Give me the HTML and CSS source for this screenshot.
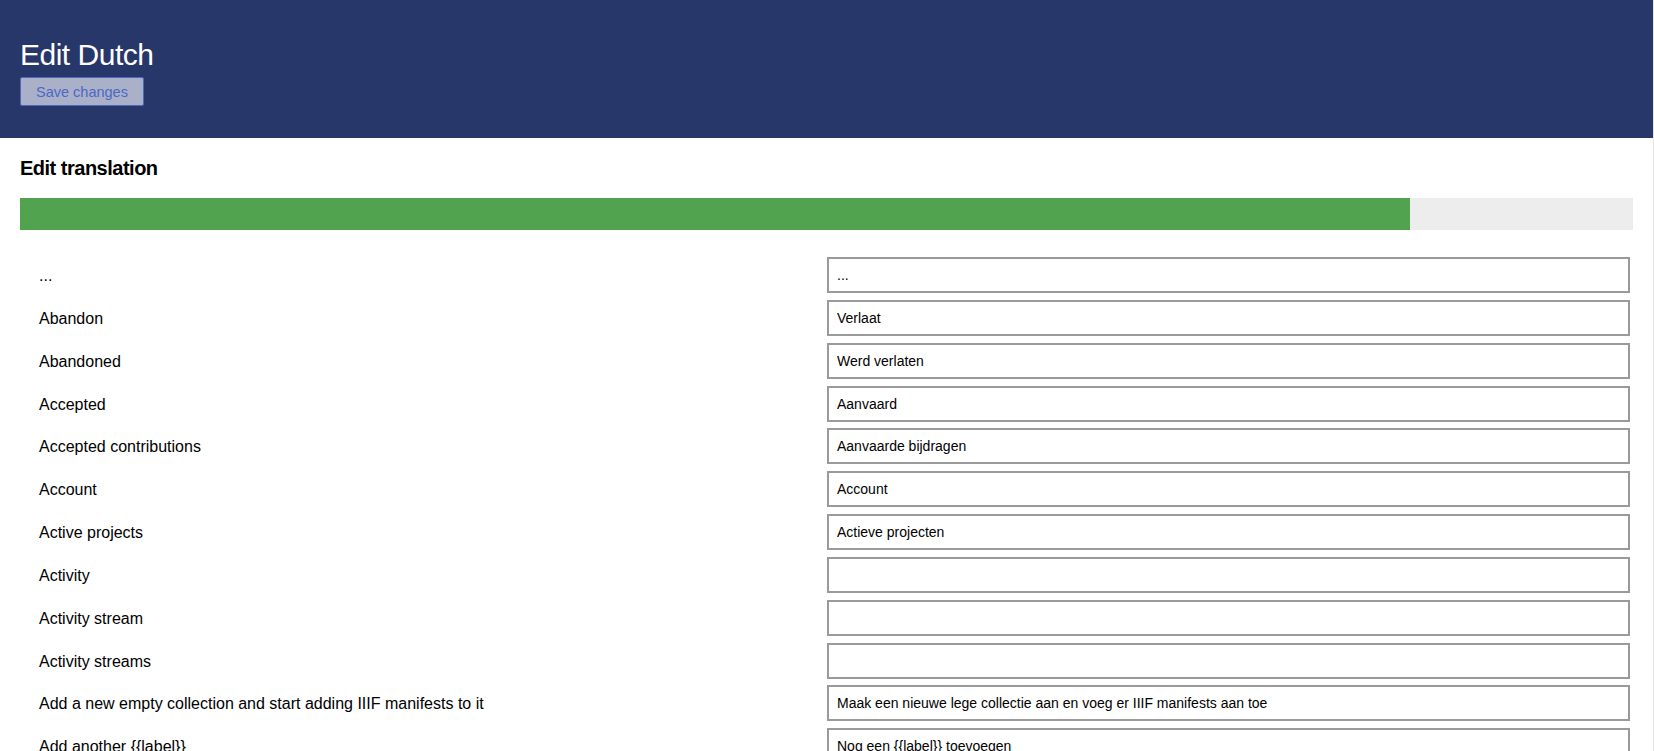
FILE: index.html
```html
<!DOCTYPE html>
<html lang="en">
<head>
<meta charset="utf-8">
<title>Edit Dutch</title>
<link rel="stylesheet" href="styles.css">
</head>
<body>
<div class="page">
  <header class="header">
    <h1 class="header-title">Edit Dutch</h1>
    <button class="save-btn" type="button" disabled>Save changes</button>
  </header>
  <main class="content">
    <h2 class="section-title">Edit translation</h2>
    <div class="progress"><div class="progress-fill" style="width: 86.2%"></div></div>
    <div class="rows">
      <div class="label">...</div>
      <div class="field"><input class="input" type="text" value="..."></div>
      <div class="label">Abandon</div>
      <div class="field"><input class="input" type="text" value="Verlaat"></div>
      <div class="label">Abandoned</div>
      <div class="field"><input class="input" type="text" value="Werd verlaten"></div>
      <div class="label">Accepted</div>
      <div class="field"><input class="input" type="text" value="Aanvaard"></div>
      <div class="label">Accepted contributions</div>
      <div class="field"><input class="input" type="text" value="Aanvaarde bijdragen"></div>
      <div class="label">Account</div>
      <div class="field"><input class="input" type="text" value="Account"></div>
      <div class="label">Active projects</div>
      <div class="field"><input class="input" type="text" value="Actieve projecten"></div>
      <div class="label">Activity</div>
      <div class="field"><input class="input" type="text" value=""></div>
      <div class="label">Activity stream</div>
      <div class="field"><input class="input" type="text" value=""></div>
      <div class="label">Activity streams</div>
      <div class="field"><input class="input" type="text" value=""></div>
      <div class="label">Add a new empty collection and start adding IIIF manifests to it</div>
      <div class="field"><input class="input" type="text" value="Maak een nieuwe lege collectie aan en voeg er IIIF manifests aan toe"></div>
      <div class="label">Add another {{label}}</div>
      <div class="field"><input class="input" type="text" value="Nog een {{label}} toevoegen"></div>
    </div>
  </main>
</div>
</body>
</html>
```
FILE: styles.css
```css
* { box-sizing: border-box; }

html, body {
  margin: 0;
  padding: 0;
  background: #ffffff;
}

body {
  font-family: "Liberation Sans", Arial, sans-serif;
  color: #000000;
}

.page {
  width: 1654px;
  min-height: 751px;
  border-right: 1px solid #e4e4e4;
}

.header {
  background: #283769;
  padding: 37px 20px 32px;
  display: flex;
  flex-direction: column;
  align-items: flex-start;
}

.header-title {
  margin: 0 0 4px;
  font-size: 30px;
  line-height: 36px;
  font-weight: normal;
  letter-spacing: -0.5px;
  color: #ffffff;
}

.save-btn {
  height: 29px;
  padding: 0 15px;
  font-family: "Liberation Sans", Arial, sans-serif;
  font-size: 14.5px;
  color: #4a69c6;
  background: #aab0c7;
  border: 1px solid #4d68bf;
  border-radius: 2px;
}

.content {
  padding: 18px 20px 0;
}

.section-title {
  margin: 0 0 18px;
  font-size: 20px;
  line-height: 24px;
  font-weight: bold;
  letter-spacing: -0.5px;
}

.progress {
  height: 32px;
  background: #ededed;
}

.progress-fill {
  height: 100%;
  background: #51a34f;
}

.rows {
  margin-top: 27px;
  display: grid;
  grid-template-columns: 807px 1fr;
  row-gap: 6.85px;
}

.label {
  display: flex;
  align-items: center;
  padding-left: 19px;
  padding-top: 2px;
  font-size: 16px;
}

.field {
  display: flex;
  padding-right: 3px;
}

.input {
  width: 100%;
  height: 36px;
  padding: 0 8px;
  border: 2px solid #9a9a9a;
  border-radius: 0;
  font-family: "Liberation Sans", Arial, sans-serif;
  font-size: 14px;
  color: #000000;
  background: #ffffff;
  outline: none;
}
```
